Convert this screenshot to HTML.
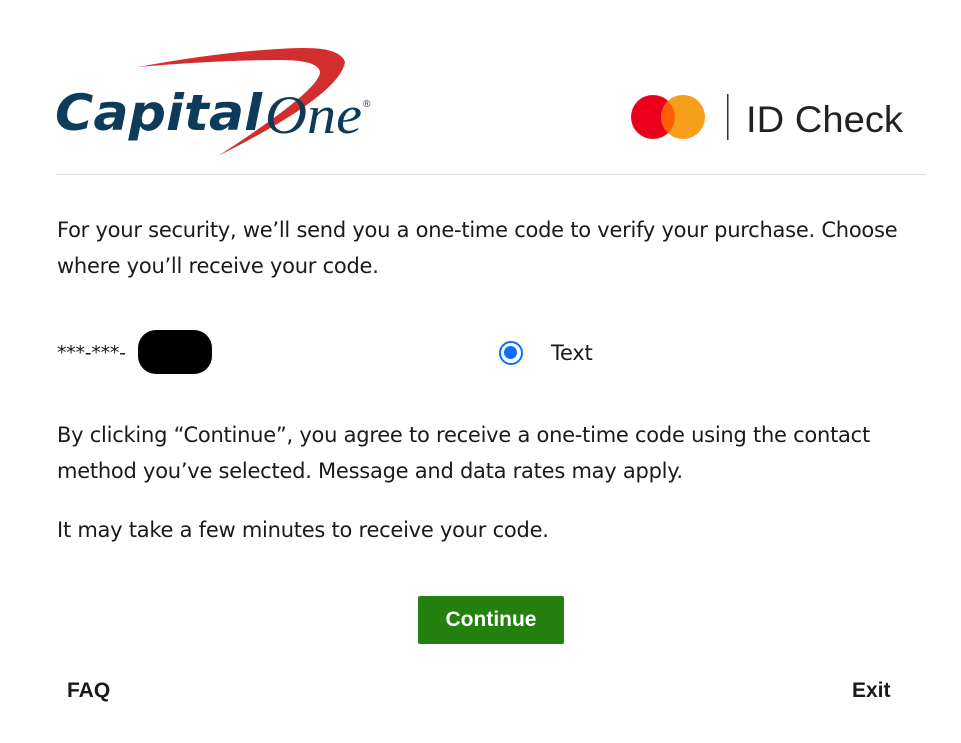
<!DOCTYPE html>
<html><head><meta charset="utf-8"><style>
body{margin:0;width:961px;height:743px;background:#fff;font-family:"DejaVu Sans","Liberation Sans",sans-serif;color:#1a1a1a;position:relative;overflow:hidden}
.t{position:absolute;font-size:21px;line-height:36px;letter-spacing:-0.25px}
</style></head><body>
<svg style="position:absolute;left:0;top:0" width="961" height="180">
<path d="M138 67 Q230 50 300 48 Q340 47 345 62 Q340 95 218 156 Q320 90 320 72 Q318 60 280 60 Q220 60 138 67Z" fill="#d22e2e"/>
<text x="55" y="130" font-family="DejaVu Sans" font-weight="bold" font-style="italic" font-size="50" fill="#0e3b5a" textLength="207" lengthAdjust="spacingAndGlyphs">Capital</text>
<text x="265" y="133" font-family="Liberation Serif" font-style="italic" font-size="54" fill="#0e3b5a" textLength="97" lengthAdjust="spacingAndGlyphs">One</text>
<text x="363" y="107" font-family="Liberation Sans" font-size="10" fill="#0e3b5a">®</text>
<circle cx="653" cy="117" r="22" fill="#eb001b"/>
<circle cx="683" cy="117" r="22" fill="#f79e1b"/>
<path d="M668 101 A22 22 0 0 1 668 133 A22 22 0 0 1 668 101Z" fill="#ff5f00"/>
<rect x="727" y="94" width="1.5" height="46" fill="#333"/>
<text x="746" y="132" font-family="Liberation Sans" font-size="37" fill="#222" textLength="157" lengthAdjust="spacingAndGlyphs">ID Check</text>
<rect x="56" y="174" width="870" height="1" fill="#ddd"/>
</svg>
<div class="t" style="left:57px;top:212px;width:870px">For your security, we’ll send you a one-time code to verify your purchase. Choose where you’ll receive your code.</div>
<div class="t" style="left:57px;top:335px;font-size:19px">***-***-</div>
<div style="position:absolute;left:138px;top:330px;width:74px;height:44px;background:#000;border-radius:18px"></div>
<div style="position:absolute;left:499px;top:341px;border:2.5px solid #0d6efd;border-radius:50%;box-sizing:border-box;width:24px;height:24px"><div style="position:absolute;left:3px;top:3px;width:13px;height:13px;border-radius:50%;background:#0d6efd"></div></div>
<div class="t" style="left:551px;top:335px">Text</div>
<div class="t" style="left:57px;top:417px;width:860px">By clicking “Continue”, you agree to receive a one-time code using the contact method you’ve selected. Message and data rates may apply.</div>
<div class="t" style="left:57px;top:512px">It may take a few minutes to receive your code.</div>
<div style="position:absolute;left:418px;top:596px;width:146px;height:48px;background:#25810f;border-radius:2px;color:#fff;font-weight:bold;font-size:21px;line-height:48px;text-align:center;font-family:'Liberation Sans',sans-serif">Continue</div>
<div style="position:absolute;left:67px;top:679px;font-weight:bold;font-size:21px;font-family:'Liberation Sans',sans-serif">FAQ</div>
<div style="position:absolute;left:852px;top:679px;font-weight:bold;font-size:21px;font-family:'Liberation Sans',sans-serif">Exit</div>
</body></html>
